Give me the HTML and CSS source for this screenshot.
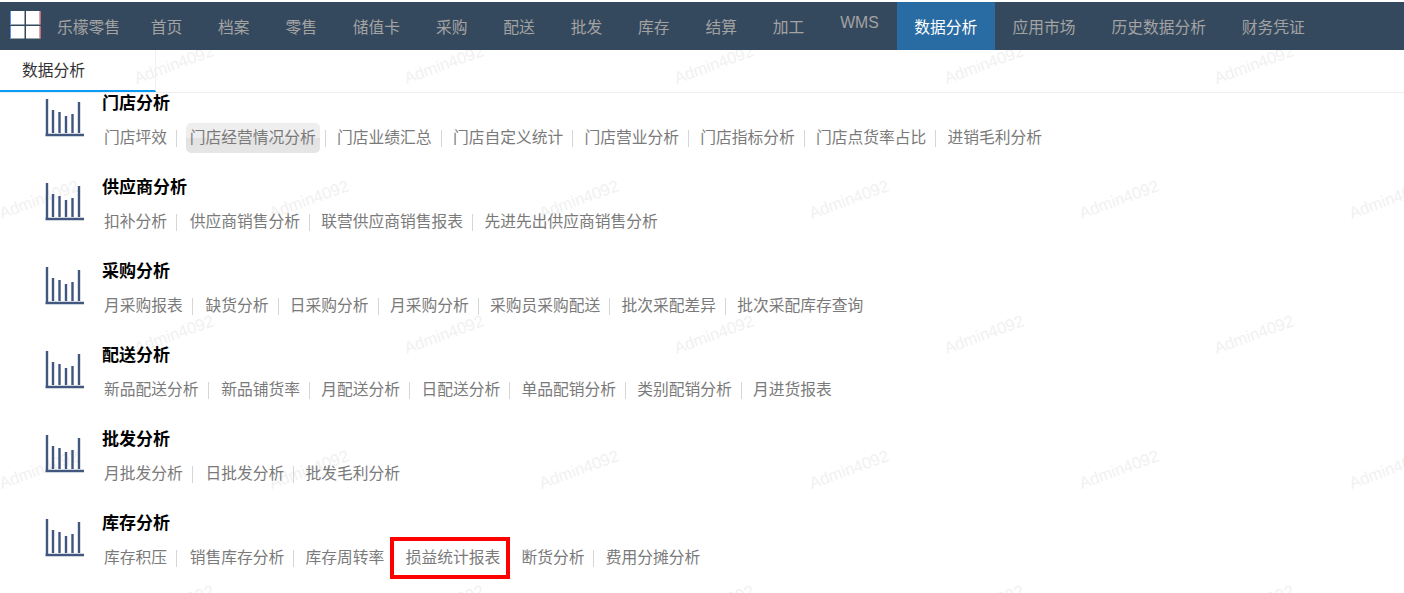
FILE: index.html
```html
<!DOCTYPE html>
<html lang="zh-CN">
<head>
<meta charset="utf-8">
<title>数据分析</title>
<link rel="stylesheet" href="styles.css">
</head>
<body>
<header class="topbar">
  <svg class="logo" width="32" height="29" viewBox="0 0 32 29" aria-hidden="true">
    <rect x="0" y="0" width="14.5" height="13.5" fill="#fff"/>
    <rect x="16" y="0" width="14.5" height="13.5" fill="#fff"/>
    <rect x="0" y="15" width="14.5" height="12.5" fill="#fff"/>
    <rect x="16" y="15" width="14.5" height="12.5" fill="#fff"/>
    <rect x="0" y="0" width="1" height="13.5" fill="#5b8df0"/>
    <rect x="0" y="15" width="1" height="12.5" fill="#5b8df0"/>
    <rect x="29.5" y="0" width="1" height="13.5" fill="#d8404a"/>
    <rect x="29.5" y="15" width="1" height="12.5" fill="#d8404a"/>
  </svg>
  <span class="brand">乐檬零售</span>
  <nav class="nav">
    <a class="nav-item">首页</a>
    <a class="nav-item">档案</a>
    <a class="nav-item">零售</a>
    <a class="nav-item">储值卡</a>
    <a class="nav-item">采购</a>
    <a class="nav-item">配送</a>
    <a class="nav-item">批发</a>
    <a class="nav-item">库存</a>
    <a class="nav-item">结算</a>
    <a class="nav-item">加工</a>
    <a class="nav-item nav-item-latin">WMS</a>
    <a class="nav-item nav-item-active">数据分析</a>
    <a class="nav-item">应用市场</a>
    <a class="nav-item">历史数据分析</a>
    <a class="nav-item">财务凭证</a>
  </nav>
</header>

<div class="tabs"><div class="tab">数据分析</div></div>

<main class="content">
  <section class="group">
    <svg class="chart" width="40" height="38" viewBox="0 0 40 38" aria-hidden="true"><path d="M2 0V35.500M0.500 36H39M8 11V34M14.500 13V34M21 17V34M27.500 15V34M34 3V34"/></svg>
    <div class="group-body">
      <h2 class="group-title">门店分析</h2>
      <div class="links">
        <a class="link">门店坪效</a><i class="sep"></i>
        <a class="link link-hover">门店经营情况分析</a><i class="sep"></i>
        <a class="link">门店业绩汇总</a><i class="sep"></i>
        <a class="link">门店自定义统计</a><i class="sep"></i>
        <a class="link">门店营业分析</a><i class="sep"></i>
        <a class="link">门店指标分析</a><i class="sep"></i>
        <a class="link">门店点货率占比</a><i class="sep"></i>
        <a class="link">进销毛利分析</a>
      </div>
    </div>
  </section>
  <section class="group">
    <svg class="chart" width="40" height="38" viewBox="0 0 40 38" aria-hidden="true"><path d="M2 0V35.500M0.500 36H39M8 11V34M14.500 13V34M21 17V34M27.500 15V34M34 3V34"/></svg>
    <div class="group-body">
      <h2 class="group-title">供应商分析</h2>
      <div class="links">
        <a class="link">扣补分析</a><i class="sep"></i>
        <a class="link">供应商销售分析</a><i class="sep"></i>
        <a class="link">联营供应商销售报表</a><i class="sep"></i>
        <a class="link">先进先出供应商销售分析</a>
      </div>
    </div>
  </section>
  <section class="group">
    <svg class="chart" width="40" height="38" viewBox="0 0 40 38" aria-hidden="true"><path d="M2 0V35.500M0.500 36H39M8 11V34M14.500 13V34M21 17V34M27.500 15V34M34 3V34"/></svg>
    <div class="group-body">
      <h2 class="group-title">采购分析</h2>
      <div class="links">
        <a class="link">月采购报表</a><i class="sep"></i>
        <a class="link">缺货分析</a><i class="sep"></i>
        <a class="link">日采购分析</a><i class="sep"></i>
        <a class="link">月采购分析</a><i class="sep"></i>
        <a class="link">采购员采购配送</a><i class="sep"></i>
        <a class="link">批次采配差异</a><i class="sep"></i>
        <a class="link">批次采配库存查询</a>
      </div>
    </div>
  </section>
  <section class="group">
    <svg class="chart" width="40" height="38" viewBox="0 0 40 38" aria-hidden="true"><path d="M2 0V35.500M0.500 36H39M8 11V34M14.500 13V34M21 17V34M27.500 15V34M34 3V34"/></svg>
    <div class="group-body">
      <h2 class="group-title">配送分析</h2>
      <div class="links">
        <a class="link">新品配送分析</a><i class="sep"></i>
        <a class="link">新品铺货率</a><i class="sep"></i>
        <a class="link">月配送分析</a><i class="sep"></i>
        <a class="link">日配送分析</a><i class="sep"></i>
        <a class="link">单品配销分析</a><i class="sep"></i>
        <a class="link">类别配销分析</a><i class="sep"></i>
        <a class="link">月进货报表</a>
      </div>
    </div>
  </section>
  <section class="group">
    <svg class="chart" width="40" height="38" viewBox="0 0 40 38" aria-hidden="true"><path d="M2 0V35.500M0.500 36H39M8 11V34M14.500 13V34M21 17V34M27.500 15V34M34 3V34"/></svg>
    <div class="group-body">
      <h2 class="group-title">批发分析</h2>
      <div class="links">
        <a class="link">月批发分析</a><i class="sep"></i>
        <a class="link">日批发分析</a><i class="sep"></i>
        <a class="link">批发毛利分析</a>
      </div>
    </div>
  </section>
  <section class="group">
    <svg class="chart" width="40" height="38" viewBox="0 0 40 38" aria-hidden="true"><path d="M2 0V35.500M0.500 36H39M8 11V34M14.500 13V34M21 17V34M27.500 15V34M34 3V34"/></svg>
    <div class="group-body">
      <h2 class="group-title">库存分析</h2>
      <div class="links">
        <a class="link">库存积压</a><i class="sep"></i>
        <a class="link">销售库存分析</a><i class="sep"></i>
        <a class="link">库存周转率</a><i class="sep"></i>
        <a class="link">损益统计报表<span class="marker"></span></a><i class="sep"></i>
        <a class="link">断货分析</a><i class="sep"></i>
        <a class="link">费用分摊分析</a>
      </div>
    </div>
  </section>
</main>

<div class="watermarks" aria-hidden="true">
  <div class="wm-row wm-row-a"><span class="wm">Admin4092</span><span class="wm">Admin4092</span><span class="wm">Admin4092</span><span class="wm">Admin4092</span><span class="wm">Admin4092</span></div>
  <div class="wm-row wm-row-b"><span class="wm">Admin4092</span><span class="wm">Admin4092</span><span class="wm">Admin4092</span><span class="wm">Admin4092</span><span class="wm">Admin4092</span><span class="wm">Admin4092</span></div>
  <div class="wm-row wm-row-a"><span class="wm">Admin4092</span><span class="wm">Admin4092</span><span class="wm">Admin4092</span><span class="wm">Admin4092</span><span class="wm">Admin4092</span></div>
  <div class="wm-row wm-row-b"><span class="wm">Admin4092</span><span class="wm">Admin4092</span><span class="wm">Admin4092</span><span class="wm">Admin4092</span><span class="wm">Admin4092</span><span class="wm">Admin4092</span></div>
  <div class="wm-row wm-row-a"><span class="wm">Admin4092</span><span class="wm">Admin4092</span><span class="wm">Admin4092</span><span class="wm">Admin4092</span><span class="wm">Admin4092</span></div>
</div>
</body>
</html>
```

FILE: styles.css
```css
* {
  box-sizing: border-box;
}

html,
body {
  margin: 0;
  height: 593px;
  overflow: hidden;
}

body {
  position: relative;
  padding-top: 2px;
  background: #fff;
  font-family: "Liberation Sans", "Noto Sans CJK SC", sans-serif;
  font-size: 15.75px;
}

.topbar {
  position: relative;
  z-index: 1;
  display: flex;
  align-items: center;
  height: 48px;
  background: #35495e;
  color: #a3a3a3;
}

.logo {
  flex: none;
  margin: 0 0 1px 10px;
}

.brand {
  width: 75.800px;
  margin-left: 15px;
}

.nav {
  display: flex;
  align-self: stretch;
}

.nav-item {
  display: flex;
  align-items: center;
  padding: 0 17.95px;
}

.nav-item-latin {
  padding-bottom: 7px;
}

.nav-item-active {
  padding: 0 17.5px;
  background: #296ca3;
  color: #fff;
}

.tabs {
  height: 43px;
  border-bottom: 1px solid #eee;
}

.tab {
  width: 156px;
  height: 42px;
  padding: 10px 0 0 22px;
  border-right: 1px solid #f0f0f0;
  border-bottom: 2px solid #0a9bf5;
  color: #333;
  line-height: 22px;
}

.content {
  position: relative;
  z-index: 1;
  padding-left: 45px;
}

.group {
  display: flex;
  height: 84px;
}

.chart {
  flex: none;
  margin-top: 6px;
}

.chart path {
  fill: none;
  stroke: #41577f;
  stroke-width: 2.4;
}

.group-body {
  margin-left: 17px;
}

.group-title {
  margin: 0;
  color: #000;
  font-size: 17px;
  font-weight: 700;
  line-height: 22px;
}

.links {
  display: flex;
  align-items: center;
  height: 30px;
  margin-top: 8px;
  margin-left: -2px;
  color: #7a7a7a;
  line-height: 30px;
}

.link {
  position: relative;
  display: block;
  flex: none;
  padding: 0 4px;
  border-radius: 5px;
  white-space: nowrap;
}

.link-hover {
  background: linear-gradient(#eee, #eee 50%, #e2e2e2 50%, #e6e6e6);
}

.sep {
  flex: none;
  width: 1px;
  height: 17px;
  margin: 0 7.3px 0 5px;
  background: #d6d6d6;
}

.link:first-child + .sep {
  margin-right: 8.8px;
}

.marker {
  position: absolute;
  top: -6px;
  left: -12px;
  right: -6px;
  height: 42px;
  border: 4px solid #f00;
}

.watermarks {
  position: absolute;
  top: -3px;
  left: 0;
  width: 1404px;
  height: 596px;
  overflow: hidden;
  pointer-events: none;
}

.wm-row {
  display: flex;
  height: 135px;
}

.wm-row-a {
  margin-left: 39px;
}

.wm-row-b {
  margin-left: -96px;
}

.wm {
  flex: none;
  width: 270px;
  color: #f1f1f1;
  font-size: 16.5px;
  line-height: 135px;
  text-align: center;
  transform: rotate(-20deg);
}
```
